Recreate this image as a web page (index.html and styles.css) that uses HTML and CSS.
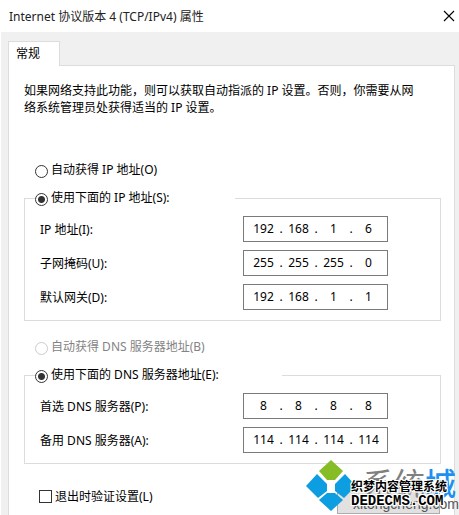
FILE: index.html
```html
<!DOCTYPE html>
<html lang="zh-CN">
<head>
<meta charset="utf-8">
<title>Internet 协议版本 4 (TCP/IPv4) 属性</title>
<link rel="stylesheet" href="styles.css">
</head>
<body>
<main class="dialog">
  <header class="titlebar">
    <h1>Internet 协议版本 4 (TCP/IPv4) 属性</h1>
    <button class="close" type="button" aria-label="关闭">
      <svg width="12" height="12" viewBox="0 0 12 12"><path d="M1 1L11 11M11 1L1 11" stroke="#000" stroke-width="1.1" fill="none"/></svg>
    </button>
  </header>
  <div class="body">
    <nav class="tabs"><button class="tab" type="button">常规</button></nav>
    <form class="panel">
      <p class="intro">如果网络支持此功能，则可以获取自动指派的 IP 设置。否则，你需要从网络系统管理员处获得适当的 IP 设置。</p>

      <label class="choice"><input type="radio" name="ip"><span>自动获得 IP 地址(O)</span></label>
      <section class="group">
        <label class="choice legend"><input type="radio" name="ip" checked><span>使用下面的 IP 地址(S):</span></label>
        <div class="row"><label for="ip1">IP 地址(I):</label>
          <div class="ip"><input id="ip1" value="192"><i>.</i><input aria-label="IP 2" value="168"><i>.</i><input aria-label="IP 3" value="1"><i>.</i><input aria-label="IP 4" value="6"></div></div>
        <div class="row"><label for="mask1">子网掩码(U):</label>
          <div class="ip"><input id="mask1" value="255"><i>.</i><input aria-label="掩码 2" value="255"><i>.</i><input aria-label="掩码 3" value="255"><i>.</i><input aria-label="掩码 4" value="0"></div></div>
        <div class="row"><label for="gw1">默认网关(D):</label>
          <div class="ip"><input id="gw1" value="192"><i>.</i><input aria-label="网关 2" value="168"><i>.</i><input aria-label="网关 3" value="1"><i>.</i><input aria-label="网关 4" value="1"></div></div>
      </section>

      <label class="choice off"><input type="radio" name="dns" disabled><span>自动获得 DNS 服务器地址(B)</span></label>
      <section class="group">
        <label class="choice legend wide"><input type="radio" name="dns" checked><span>使用下面的 DNS 服务器地址(E):</span></label>
        <div class="row"><label for="dns1">首选 DNS 服务器(P):</label>
          <div class="ip"><input id="dns1" value="8"><i>.</i><input aria-label="首选 2" value="8"><i>.</i><input aria-label="首选 3" value="8"><i>.</i><input aria-label="首选 4" value="8"></div></div>
        <div class="row"><label for="alt1">备用 DNS 服务器(A):</label>
          <div class="ip"><input id="alt1" value="114"><i>.</i><input aria-label="备用 2" value="114"><i>.</i><input aria-label="备用 3" value="114"><i>.</i><input aria-label="备用 4" value="114"></div></div>
      </section>

      <div class="footer">
        <label class="check"><input type="checkbox"><span>退出时验证设置(L)</span></label>
        <button class="advanced" type="button" aria-label="高级"></button>
      </div>
    </form>
  </div>
  <div class="watermark">
    <svg class="logo" width="50" height="52" viewBox="0 0 50 52">
      <path d="M25 0L37 11L29 20H21L13 11Z" fill="#86bc25"/>
      <path d="M11 14L21 24V31L12 38L0 26Z" fill="#0c9ee0"/>
      <path d="M39 14L50 26L38 38L29 31V24Z" fill="#0c9ee0"/>
      <path d="M21 33H29L37 40L25 51L13 40Z" fill="#0c9ee0"/>
    </svg>
    <div class="brand">系统<b>城</b></div>
    <div class="site">xitongcheng.com</div>
    <div class="cms">织梦内容管理系统</div>
    <div class="cms-url">DEDECMS.COM</div>
  </div>
</main>
</body>
</html>
```
FILE: styles.css
```css
* { box-sizing: border-box; }
body {
  margin: 0;
  background: #fff;
  color: #000;
  font: 12px/17px "Noto Sans", "Noto Sans CJK SC", sans-serif;
}
button, input { font: inherit; color: inherit; }
.dialog {
  position: relative;
  display: flex;
  flex-direction: column;
  height: 100vh;
  padding-left: 1px;
  overflow: hidden;
}
.titlebar {
  display: flex;
  flex: none;
  align-items: center;
  justify-content: space-between;
  height: 32px;
  padding: 0 4px 0 8px;
}
.titlebar h1 { margin: 0; font-size: 12px; font-weight: 400; color: #222; }
.close { display: flex; padding: 0; border: 0; background: none; }
.body {
  display: flex;
  flex: 1;
  flex-direction: column;
  padding: 9px 4px 0 7px;
  background: #f0f0f0;
}
.tabs { display: flex; }
.tab {
  width: 52px;
  height: 25px;
  margin-bottom: -1px;
  padding: 0 0 2px 7px;
  border: 1px solid #dcdcdc;
  border-bottom: 0;
  background: #fff;
  text-align: left;
  z-index: 1;
}
.panel {
  flex: 1;
  padding: 16px 13px 0 15px;
  border: 1px solid #dcdcdc;
  border-bottom: 0;
  background: #fff;
}
.intro { margin: 0 16px 46px 0; }
.choice { display: flex; align-items: center; gap: 3px; height: 18px; padding-left: 11px; }
.choice span { padding-bottom: 3px; }
input[type="radio"] {
  appearance: none;
  width: 13px;
  height: 13px;
  margin: 0;
  border: 1px solid #333;
  border-radius: 50%;
  background: #fff;
}
input[type="radio"]:checked { background: radial-gradient(circle, #333 3px, #fff 4px); }
.off { color: #838383; }
.off input[type="radio"] { border-color: #ccc; }
.group {
  display: flex;
  flex-direction: column;
  gap: 8px;
  margin: 18px 0;
  padding: 0 0 10px;
  border: 1px solid #dcdcdc;
}
.legend {
  width: 200px;
  margin: -9px 0 0 10px;
  padding-left: 0;
  background: #fff;
}
.wide { width: 247px; }
.row { display: flex; align-items: center; padding: 0 52px 0 15px; }
.row > label { flex: 1; }
.ip {
  display: flex;
  width: 145px;
  height: 26px;
  padding: 0 0 2px 5px;
  border: 1px solid #7a7a7a;
}
.ip input {
  width: 29px;
  padding: 0;
  border: 0;
  background: none;
  text-align: center;
}
.ip i { width: 6px; font-style: normal; line-height: 23px; text-align: center; }
.footer { display: flex; align-items: flex-start; justify-content: space-between; padding: 6px 1px 0 15px; }
.check { display: flex; align-items: center; gap: 3px; height: 17px; }
.check input {
  appearance: none;
  width: 13px;
  height: 13px;
  margin: 0;
  border: 1px solid #333;
  background: #fff;
}
.advanced {
  width: 103px;
  height: 26px;
  border: 1px solid #adadad;
  background: #e1e1e1;
}
.watermark { position: absolute; right: 0; bottom: 0; width: 153px; height: 55px; white-space: nowrap; }
.watermark > * { position: absolute; }
.logo { top: 0; left: 0; }
.brand { top: 6px; left: 57px; font-size: 31px; line-height: 34px; font-weight: 400; color: #808080; }
.brand b { font-weight: 500; color: #1e90f0; }
.site { top: 34px; left: 47px; font: 14px/20px "Liberation Sans", sans-serif; color: #555; }
.cms, .cms-url {
  left: 45px;
  font-weight: 700;
  text-shadow: 1px 0 #fff, -1px 0 #fff, 0 1px #fff, 0 -1px #fff, 1px 1px #fff, -1px -1px #fff, 1px -1px #fff, -1px 1px #fff;
}
.cms { top: 18px; }
.cms-url { top: 33px; font: 700 14px/16px "Liberation Mono", monospace; }
```
